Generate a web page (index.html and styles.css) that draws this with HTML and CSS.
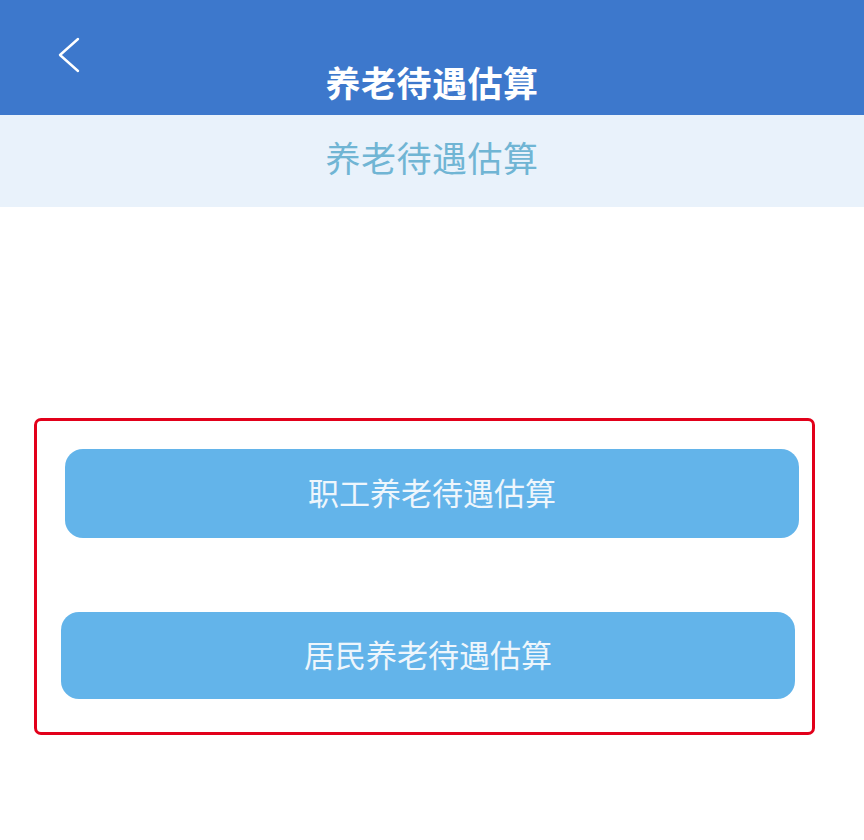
FILE: index.html
```html
<!DOCTYPE html>
<html lang="zh-CN">
<head>
<meta charset="utf-8">
<title>养老待遇估算</title>
<link rel="stylesheet" href="styles.css">
</head>
<body>
<header class="topbar">
  <span class="back" aria-label="返回">
    <svg width="24" height="36" viewBox="0 0 24 36"><polyline points="20,2 2,18 20,34" fill="none" stroke="#ffffff" stroke-width="2.4" stroke-linecap="round" stroke-linejoin="round"/></svg>
  </span>
  <h1 class="title">养老待遇估算</h1>
</header>
<div class="band">养老待遇估算</div>
<main class="content">
  <section class="box">
    <button class="btn btn-first">职工养老待遇估算</button>
    <button class="btn btn-second">居民养老待遇估算</button>
  </section>
</main>
</body>
</html>
```
FILE: styles.css
```css
* { box-sizing: border-box; }
html, body { margin: 0; padding: 0; background: #ffffff; }
body {
  width: 864px;
  height: 840px;
  overflow: hidden;
  font-family: "Noto Sans CJK SC", "Noto Sans", sans-serif;
}
.topbar {
  position: relative;
  height: 115px;
  background: #3d78cc;
  display: flex;
  justify-content: center;
  align-items: flex-start;
  padding-top: 57px;
}
.back {
  position: absolute;
  left: 58px;
  top: 37px;
  width: 24px;
  height: 36px;
  display: block;
}
.back svg { display: block; }
.title {
  margin: 0;
  font-size: 35px;
  line-height: 50px;
  font-weight: 700;
  color: #ffffff;
  letter-spacing: 0.5px;
}
.band {
  height: 92px;
  background: #e9f2fb;
  color: #70b5d4;
  font-size: 35px;
  line-height: 84px;
  text-align: center;
  letter-spacing: 0.5px;
}
.content {
  padding: 211px 49px 0 34px;
}
.box {
  height: 317px;
  border: 3px solid #e2001a;
  border-radius: 7px;
  padding-top: 28px;
  display: flex;
  flex-direction: column;
}
.btn {
  border: none;
  background: #63b4ea;
  color: #eef6fc;
  font-family: "Noto Sans CJK SC", "Noto Sans", sans-serif;
  font-size: 31px;
  border-radius: 18px;
  padding: 0 0 4px;
  text-align: center;
}
.btn-first {
  height: 89px;
  margin: 0 13px 0 28px;
}
.btn-second {
  height: 87px;
  margin: 74px 17px 0 24px;
}
```
